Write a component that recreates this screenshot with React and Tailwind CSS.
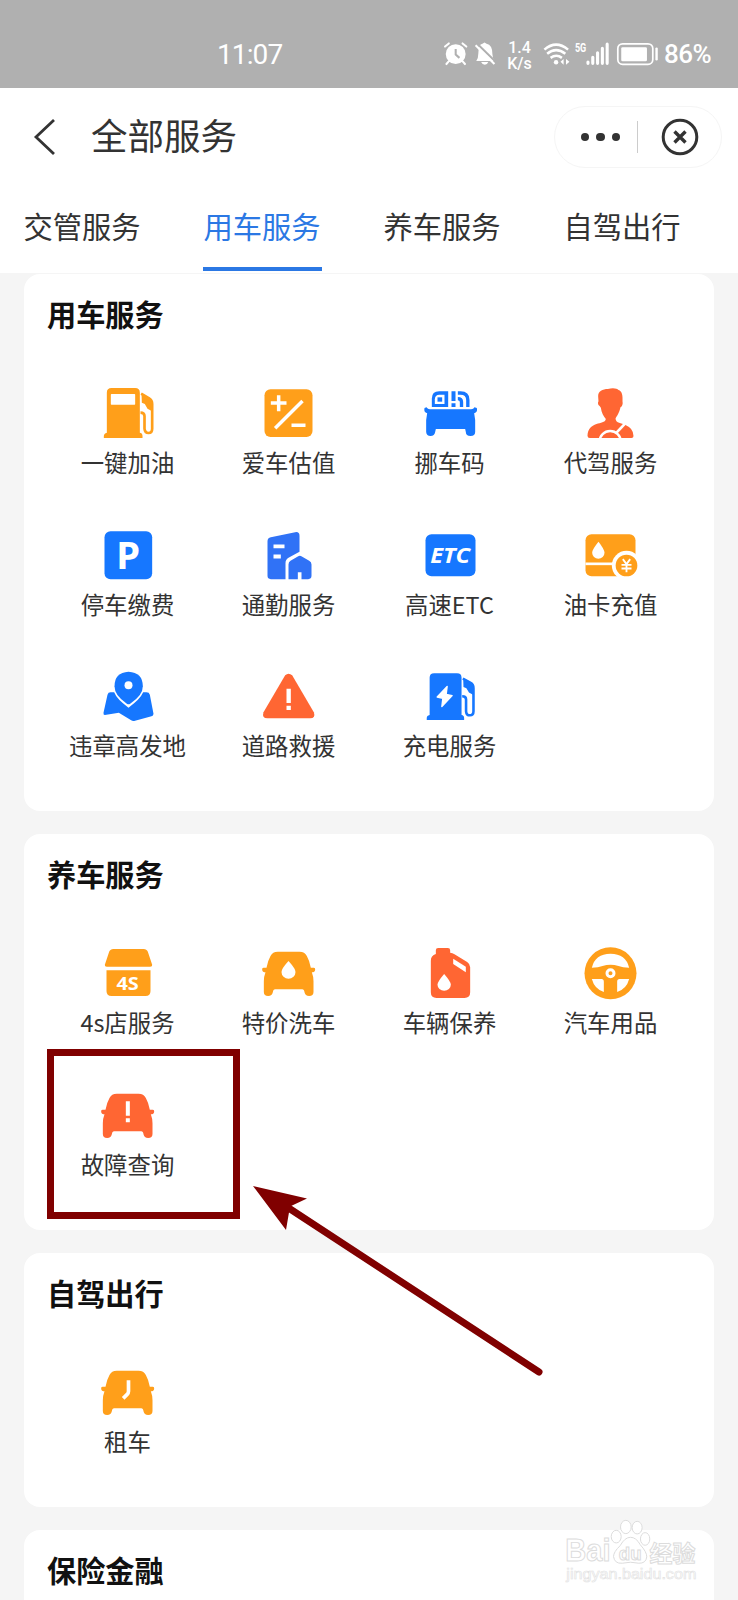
import React from "react";

const ORANGE = "#ff9f1a";
const BLUE = "#1677ff";
const RED = "#ff6633";

/* ---------------- ICONS ---------------- */
function Icon({ box, children }) {
  return (
    <svg viewBox={box} className="block w-[60px] h-[60px]">
      {children}
    </svg>
  );
}

function PumpShape({ color }) {
  return (
    <>
      <path
        d="M139 188V68q0-14 14-14h71q14 0 14 14v120q8 1 8 10v6H130v-6q0-8 9-10z"
        fill={color}
      />
      <path
        d="M242 71l24 14q9 5 9 17v74q0 13-11 13t-12-13v-38q0-10-12-10"
        fill="none"
        stroke={color}
        strokeWidth="8"
      />
      <path d="M243 70l24 13q8 5 8 15v26l-14-8-8-14-9-4z" fill={color} />
    </>
  );
}

const FuelIcon = () => (
  <Icon box="112.5 39 180 180">
    <PumpShape color={ORANGE} />
    <rect x="151" y="72" width="73" height="32" rx="2" fill="#fff" />
  </Icon>
);

const ChargeIcon = () => (
  <Icon box="1078.5 33 180 180">
    <g transform="translate(973 4) scale(.967 .937)">
      <PumpShape color={BLUE} />
    </g>
    <path
      d="M1160 94l-30 32 17 4-3 25 31-33-18-4z"
      fill="#fff"
      stroke="#fff"
      strokeWidth="4"
      strokeLinejoin="round"
    />
  </Icon>
);

const ValueIcon = () => (
  <Icon box="595.5 39 180 180">
    <rect x="612" y="58" width="144" height="143" rx="18" fill={ORANGE} />
    <path
      d="M631 99h47M654.500 76v48M644 175l82-82M693 166h42"
      stroke="#fff"
      strokeWidth="10.500"
      fill="none"
    />
  </Icon>
);

const MoveCarIcon = () => (
  <Icon box="148.5 39 180 180">
    <path d="M184 111V86q0-22 22-22h27v47z" fill={BLUE} />
    <path d="M193 102V88q0-14 14-14h15v28z" fill="#fff" />
    <rect x="201" y="82" width="14" height="13" fill={BLUE} />
    <path d="M243 64h12v29h-12zM243 100h12v11h-12z" fill={BLUE} />
    <path
      d="M262 69h8q22 0 22 21v21M262 86q11 0 11 10v15"
      fill="none"
      stroke={BLUE}
      strokeWidth="10"
    />
    <path
      d="M168 112q4 6 10 6h124q7 0 10-6l7 2q3 13-8 16l3 20v36q0 12-14 12t-14-12l-2-9H196l-2 9q-2 12-14 12t-13-12v-36l3-20q-11-3-8-16z"
      fill={BLUE}
    />
  </Icon>
);

const DriverIcon = () => (
  <Icon box="631.5 39 180 180">
    <path
      d="M688 109C681 104 682 97 684 94L683 80C682 63 697 57 712 57 727 52 740 55 744 60 755 64 757 76 756 94 758 102 755 110 750 112 746 130 739 138 735 146 737 160 752 158 765 165Q789 175 789 198 789 204 783 204H658Q651 204 651 197C652 176 662 168 678 162 690 158 704 158 706 147 699 138 693 128 691 113z"
      fill={RED}
    />
    <circle cx="719" cy="215" r="32" fill="none" stroke="#fff" strokeWidth="7" />
    <path d="M738 188l32-34" stroke="#fff" strokeWidth="8" />
    <path d="M645 205h150v30H645z" fill="#fff" />
  </Icon>
);

const ParkingIcon = () => (
  <Icon box="112.5 28.5 180 180">
    <rect x="132" y="47" width="143" height="144" rx="18" fill={BLUE} />
    <text
      x="167"
      y="161"
      fontSize="115"
      fontWeight="700"
      fontFamily="Noto Sans"
      fill="#fff"
    >
      P
    </text>
  </Icon>
);

const CommuteIcon = () => (
  <Icon box="595.5 28.5 180 180">
    <path
      d="M621 77q0-10 10-12l73-15q13-2 13 11v48l-33 18q-9 5-9 16v48h-44q-10 0-10-10z"
      fill="#3072f6"
    />
    <path d="M639 87h33v11h-33zM639 117h22v12h-22z" fill="#fff" />
    <path
      d="M684 147q0-7 6-11l22-13q6-4 12 0l22 13q7 4 7 11v34q0 10-10 10h-20v-21h-11v21h-28z"
      fill="#3072f6"
    />
  </Icon>
);

const EtcIcon = () => (
  <Icon box="148.5 28.5 180 180">
    <rect x="165" y="56" width="150" height="126" rx="18" fill={BLUE} />
    <text
      x="179"
      y="142"
      fontSize="64"
      fontWeight="700"
      fontStyle="italic"
      fontFamily="Open Sans"
      textLength="120"
      lengthAdjust="spacingAndGlyphs"
      fill="#fff"
    >
      ETC
    </text>
  </Icon>
);

const OilCardIcon = () => (
  <Icon box="631.5 28.5 180 180">
    <rect x="645" y="56" width="150" height="126" rx="18" fill={ORANGE} />
    <path d="M645 145h84" stroke="#fff" strokeWidth="8" />
    <path d="M684 79q18 23 18 33a18 17 0 0 1-37 0q0-10 19-33z" fill="#fff" />
    <circle cx="768" cy="150" r="44" fill="#fff" />
    <circle cx="768" cy="150" r="32.500" fill={ORANGE} />
    <path
      d="M757 131l11 15 11-15M768 146v24M753 148h30M753 159h30"
      fill="none"
      stroke="#fff"
      strokeWidth="5.500"
    />
  </Icon>
);

const MapIcon = () => (
  <Icon box="112.5 33 180 180">
    <path
      d="M141 119q2-7 9-7h11q8 21 43 46 35-25 44-46h10q8 0 10 7l11 57q0 6-6 8l-52 14q-5 1-9-2l-37-23-42 7q-5 0-4-7z"
      fill={BLUE}
    />
    <path
      d="M204 50q43 2 43 44 0 28-38 52-5 3-10 0-37-24-37-52 0-42 42-44z"
      fill={BLUE}
    />
    <circle cx="204" cy="91" r="12" fill="#fff" />
  </Icon>
);

const RescueIcon = () => (
  <Icon box="595.5 33 180 180">
    <path
      d="M674 61q10-10 21 0l65 111q6 18-11 18H621q-18 0-12-18z"
      fill={RED}
    />
    <path d="M678 101h13v43h-13zM678 152h13v13h-13z" fill="#fff" />
  </Icon>
);

const ShopIcon = () => (
  <Icon box="112.5 39 180 180">
    <path
      d="M145 68q3-11 14-11h90q11 0 14 11l12 36q1 6-6 6H139q-7 0-6-6z"
      fill={ORANGE}
    />
    <path d="M138 121h132v62q0 15-15 15H153q-15 0-15-15z" fill={ORANGE} />
    <text
      x="168"
      y="180"
      fontSize="55"
      fontWeight="700"
      fontFamily="Open Sans"
      textLength="67"
      lengthAdjust="spacingAndGlyphs"
      fill="#fff"
    >
      4S
    </text>
  </Icon>
);

function Car({ color, children }) {
  return (
    <Icon box="595.5 39 180 180">
      <path
        d="M652 65H717Q733 65 739 78 747 92 751 113H760Q765 113 764 119 763 127 754 127 759 140 759 154V186Q759 198 746 198 734 198 732 187 731 178 725 178H644Q638 178 637 187 635 198 623 198 610 198 610 186V154Q610 140 615 127 606 127 605 119 604 113 609 113H618Q622 92 630 78 636 65 652 65z"
        fill={color}
      />
      {children}
    </Icon>
  );
}

const WashIcon = () => (
  <Car color={ORANGE}>
    <path d="M684 93q21 23 21 33a21 20 0 0 1-42 0q0-10 21-33z" fill="#fff" />
  </Car>
);

const FaultIcon = () => (
  <Car color={RED}>
    <path d="M679 88h12v43h-12zM679 139h12v12h-12z" fill="#fff" />
  </Car>
);

const RentIcon = () => (
  <Car color={ORANGE}>
    <path d="M687 94v33q0 5-4 9l-12 12" stroke="#fff" strokeWidth="11" fill="none" />
  </Car>
);

const OilIcon = () => (
  <Icon box="148.5 39 180 180">
    <path
      d="M196 61q0-7 7-7h29q7 0 7 7v7q7 1 13 5l38 23q9 6 9 16v75q0 17-17 17h-84q-17 0-17-17V92q0-15 15-20z"
      fill={RED}
    />
    <path d="M248 86l38 24v17l-38-25z" fill="#fff" />
    <path d="M221 132q20 23 20 32a20 18 0 0 1-40 0q0-9 20-32z" fill="#fff" />
  </Icon>
);

const WheelIcon = () => (
  <Icon box="631.5 39 180 180">
    <circle cx="720" cy="130" r="78" fill={ORANGE} />
    <path d="M664 113q10-42 56-42t56 42q-20 0-32-5-24-7-48 0-12 5-32 5z" fill="#fff" />
    <path d="M664 147h29q7 0 7 8v31q-28-9-36-39zM776 147h-29q-7 0-7 8v31q28-9 36-39z" fill="#fff" />
    <circle cx="720" cy="130" r="10.500" fill="none" stroke="#fff" strokeWidth="9" />
  </Icon>
);

/* ---------------- DATA ---------------- */
const tabs = ["交管服务", "用车服务", "养车服务", "自驾出行"];

const sections = [
  {
    title: "用车服务",
    size: "h-[537px]",
    items: [
      { label: "一键加油", icon: FuelIcon },
      { label: "爱车估值", icon: ValueIcon },
      { label: "挪车码", icon: MoveCarIcon },
      { label: "代驾服务", icon: DriverIcon },
      { label: "停车缴费", icon: ParkingIcon },
      { label: "通勤服务", icon: CommuteIcon },
      { label: "高速ETC", icon: EtcIcon },
      { label: "油卡充值", icon: OilCardIcon },
      { label: "违章高发地", icon: MapIcon },
      { label: "道路救援", icon: RescueIcon },
      { label: "充电服务", icon: ChargeIcon },
    ],
  },
  {
    title: "养车服务",
    size: "h-[396px]",
    items: [
      { label: "4s店服务", icon: ShopIcon },
      { label: "特价洗车", icon: WashIcon },
      { label: "车辆保养", icon: OilIcon },
      { label: "汽车用品", icon: WheelIcon },
      { label: "故障查询", icon: FaultIcon },
    ],
  },
  {
    title: "自驾出行",
    size: "h-[254px]",
    items: [{ label: "租车", icon: RentIcon }],
  },
  { title: "保险金融", size: "h-[254px]", items: [] },
];

function StatusBar() {
  return (
    <div className="h-[88px] bg-[#b0b0b0] text-white flex items-start pt-[40px] pl-[217px] font-[Roboto]">
      <span className="w-[226px] text-[28px] leading-[30px] tracking-[-0.9px]">11:07</span>
      {/* alarm + muted bell */}
      <svg viewBox="706 60 156 80" className="w-[53.5px] h-[27.5px] shrink-0">
        <circle cx="743" cy="101" r="29" fill="#fff" />
        <path d="M712 79l11-9M774 79l-11-9M722 123l-6 7M764 123l6 7" stroke="#fff" strokeWidth="6" strokeLinecap="round" />
        <path d="M743 86v16l11 10" stroke="#b0b0b0" strokeWidth="6" fill="none" />
        <path d="M803 121q6-8 6-22 0-26 12-28l6-4 6 4q17 3 17 30 0 12 7 20z" fill="#fff" />
        <path d="M817 124h21q-3 8-10 8t-11-8z" fill="#fff" />
        <path d="M805 70l56 55" stroke="#b0b0b0" strokeWidth="6" />
        <path d="M801 75l55 55" stroke="#fff" strokeWidth="6" />
      </svg>
      <p className="w-[45px] pl-[10px] pr-[9px] text-[16px] leading-[15.5px] text-center whitespace-nowrap font-medium">
        1.4
        <br />
        K/s
      </p>
      {/* wifi, signal, battery */}
      <svg viewBox="996 60 344 80" className="w-[118px] h-[27.5px] shrink-0">
        <g fill="none" stroke="#fff" strokeWidth="7.500">
          <path d="M1003 88q34-29 69 0M1011 100q26-21 53 0M1021 112q17-12 33 0" />
        </g>
        <circle cx="1037" cy="125" r="6.500" fill="#fff" />
        <path d="M1059 115v17l-9-9zM1066 115v17l10-9z" fill="#fff" />
        <text
          x="1092"
          y="96"
          fontSize="36"
          fontWeight="700"
          fontFamily="Roboto"
          textLength="33"
          lengthAdjust="spacingAndGlyphs"
          fill="#fff"
        >
          5G
        </text>
        <path
          d="M1130 124v4M1144 110v18M1158 97v31M1172 84v44M1186 72v56"
          stroke="#fff"
          strokeWidth="9"
          strokeLinecap="round"
        />
        <rect x="1217" y="71" width="102" height="60" rx="14" fill="none" stroke="#fff" strokeWidth="5" />
        <rect x="1227" y="81" width="75" height="41" rx="4" fill="#fff" />
        <path d="M1330 85v31" stroke="#fff" strokeWidth="7" strokeLinecap="round" />
      </svg>
      <span className="ml-[4.5px] text-[26px] leading-[29px] tracking-[-0.5px] font-medium">86%</span>
    </div>
  );
}

function Header() {
  return (
    <div className="h-[185px] bg-white flex flex-col text-[#333]">
      <div className="h-[97px] flex items-center pl-[33px] pr-[16px]">
        <svg viewBox="0 0 24 38" className="w-[24px] h-[38px]">
          <path d="M21 2L3 19l18 17" fill="none" stroke="#333" strokeWidth="2.800" />
        </svg>
        <h1 className="ml-[34px] mb-[4px] text-[36.5px] leading-[44px]">全部服务</h1>
        <div className="ml-auto mt-px w-[168px] h-[62px] rounded-full border border-[#f5f5f5] flex items-center">
          <div className="flex gap-[7px] ml-[25.5px]">
            <span className="w-[8.5px] h-[8.5px] rounded-full bg-[#333]" />
            <span className="w-[8.5px] h-[8.5px] rounded-full bg-[#333]" />
            <span className="w-[8.5px] h-[8.5px] rounded-full bg-[#333]" />
          </div>
          <div className="ml-[16.5px] w-px h-[32px] bg-[#ccc]" />
          <svg viewBox="0 0 38 38" className="ml-[23px] w-[38px] h-[38px]">
            <circle cx="19" cy="19" r="16.800" fill="none" stroke="#333" strokeWidth="3" />
            <path d="M13.500 13.500l11 11M24.500 13.500l-11 11" stroke="#333" strokeWidth="3.400" />
          </svg>
        </div>
      </div>
      <div className="flex pl-[23px] flex-1">
        {tabs.map((tab, i) => (
          <div key={tab} className="w-[180px] shrink-0">
            <div
              className={
                i === 1
                  ? "w-[119px] h-[86px] pt-[20px] pr-px text-center text-[29.3px] leading-[40px] text-[#2b78e4] border-b-4 border-[#2b78e4] whitespace-nowrap"
                  : "w-[119px] h-[86px] pt-[20px] pr-px text-center text-[29.3px] leading-[40px] whitespace-nowrap"
              }
            >
              {tab}
            </div>
          </div>
        ))}
      </div>
    </div>
  );
}

function Section({ title, size, items }) {
  return (
    <section className={`${size} shrink-0 bg-white rounded-[16px] px-[23px] pt-[19px]`}>
      <h2 className="text-[29.2px] leading-[40px] font-bold text-[#111]">{title}</h2>
      <div className="mt-[50px] grid grid-cols-4 gap-y-[45.5px]">
        {items.map(({ label, icon: ItemIcon }) => (
          <div key={label} className="flex flex-col items-center">
            <ItemIcon />
            <span className="mt-[3px] text-[23.4px] leading-[33px] text-[#333] whitespace-nowrap">
              {label}
            </span>
          </div>
        ))}
      </div>
    </section>
  );
}

function Watermark() {
  return (
    <svg viewBox="0 0 400 200" className="absolute left-[565px] top-[1518px] w-[133px] h-[66.5px]">
      <g fill="#fff" stroke="#dcdcdc" strokeWidth="3">
        <ellipse cx="154" cy="56" rx="15" ry="19" />
        <ellipse cx="183" cy="27" rx="16" ry="20" />
        <ellipse cx="217" cy="29" rx="15" ry="19" />
        <ellipse cx="241" cy="63" rx="14" ry="19" />
        <path d="M197 58q17 0 29 22 20 22 20 37-3 20-24 19-25-6-50 0-23 2-26-20 0-14 20-33 14-25 31-25z" />
        <text x="1" y="130" fontSize="92" fontWeight="700" fontFamily="Liberation Sans" textLength="136" lengthAdjust="spacingAndGlyphs">Bai</text>
        <text x="162" y="125" fontSize="56" fontWeight="700" fontFamily="Liberation Sans">du</text>
        <text x="254" y="131" fontSize="69" fontWeight="700" fontFamily="Noto Sans CJK SC">经验</text>
      </g>
      <text
        x="4"
        y="184"
        fontSize="44"
        fontFamily="Liberation Sans"
        textLength="391"
        lengthAdjust="spacingAndGlyphs"
        fill="#fff"
        stroke="#e2e2e2"
        strokeWidth="1.800"
      >
        jingyan.baidu.com
      </text>
    </svg>
  );
}

export default function App() {
  return (
    <div className="relative w-[738px] h-[1600px] overflow-hidden bg-[#f5f5f5] font-['Noto_Sans_CJK_SC',sans-serif]">
      <StatusBar />
      <Header />

      <div className="px-[24px] pt-px flex flex-col gap-[23px]">
        {sections.map((s) => (
          <Section key={s.title} {...s} />
        ))}
      </div>

      {/* highlight box and arrow */}
      <div className="absolute left-[47px] top-[1049px] w-[193px] h-[170px] border-[7px] border-[#800000]" />
      <svg viewBox="0 0 300 200" className="absolute left-[250px] top-[1180px] w-[300px] h-[200px]">
        <path d="M3 6l54 12.500-17 8L36 50z" fill="#800000" />
        <path d="M34 25l255 167" stroke="#800000" strokeWidth="7" strokeLinecap="round" />
      </svg>

      <Watermark />
    </div>
  );
}
